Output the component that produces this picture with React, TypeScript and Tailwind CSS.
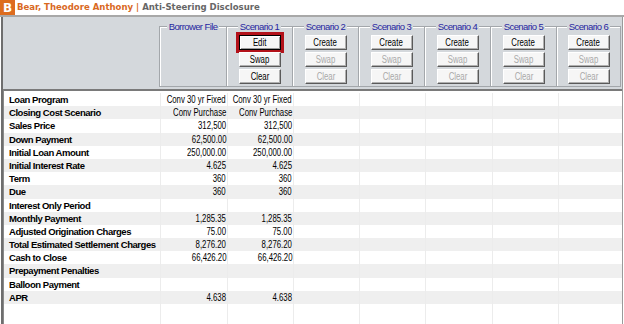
import React from "react";

const rows: [string, string, string][] = [
  ["Loan Program", "Conv 30 yr Fixed", "Conv 30 yr Fixed"],
  ["Closing Cost Scenario", "Conv Purchase", "Conv Purchase"],
  ["Sales Price", "312,500", "312,500"],
  ["Down Payment", "62,500.00", "62,500.00"],
  ["Initial Loan Amount", "250,000.00", "250,000.00"],
  ["Initial Interest Rate", "4.625", "4.625"],
  ["Term", "360", "360"],
  ["Due", "360", "360"],
  ["Interest Only Period", "", ""],
  ["Monthly Payment", "1,285.35", "1,285.35"],
  ["Adjusted Origination Charges", "75.00", "75.00"],
  ["Total Estimated Settlement Charges", "8,276.20", "8,276.20"],
  ["Cash to Close", "66,426.20", "66,426.20"],
  ["Prepayment Penalties", "", ""],
  ["Balloon Payment", "", ""],
  ["APR", "4.638", "4.638"],
];

const colW = ["w-[67px]", "w-[66px]", "w-[66px]", "w-[66px]", "w-[67px]", "w-[66px]", "w-[64px]"];

const body = { fontFamily: '"Liberation Sans", Arial, sans-serif' };

function Btn({ label, disabled, focus }: { label: string; disabled?: boolean; focus?: boolean }) {
  return (
    <div
      className={
        "w-[42px] h-[15px] flex items-center justify-center bg-[#f6f6f6] " +
        (focus
          ? "border border-black ring-[3px] ring-[#b3121a] shadow-[inset_1px_1px_0_#fff,inset_-1px_-1px_0_#9a9a9a]"
          : "border border-t-white border-l-white border-b-[#5a5a5a] border-r-[#5a5a5a] shadow-[inset_-1px_-1px_0_#b0b0b0]") +
        (disabled ? " text-[#a9a9a9]" : " text-black")
      }
    >
      <span className="inline-block text-[10px] leading-none scale-x-[0.78] origin-center whitespace-nowrap">{label}</span>
    </div>
  );
}

function Group({ title, children, w, last }: { title: string; children?: React.ReactNode; w: string; last?: boolean }) {
  return (
    <div
      className={
        "relative h-[61px] border-t border-b border-l border-[#a3a7ab] shadow-[inset_1px_1px_0_#fff] " +
        w +
        (last ? " border-r" : "")
      }
    >
      <div className="absolute left-0 right-0 -top-[6px] flex justify-center">
        <span className="bg-[#d4d8dc] px-[2px] text-[9.5px] leading-[11px] tracking-[-0.6px] text-[#2626a0]">{title}</span>
      </div>
      <div className="flex flex-col items-center gap-[2px] pt-[8px]">{children}</div>
    </div>
  );
}

export default function App() {
  return (
    <div className="w-[624px] h-[324px] bg-white overflow-hidden flex flex-col" style={body}>
      {/* header */}
      <div className="h-[17px] flex items-start border-b-2 border-[#a8a8a8] bg-white">
        <div
          className="w-[15px] h-[15px] bg-[#dd6c1e] flex items-center justify-center text-white font-bold text-[12px] leading-none"
          style={{ fontFamily: '"DejaVu Sans", sans-serif' }}
        >
          B
        </div>
        <div
          className="ml-[2px] h-[15px] flex items-center text-[9.5px] font-bold whitespace-pre"
          style={{ fontFamily: '"DejaVu Sans Condensed", "DejaVu Sans", sans-serif' }}
        >
          <span className="text-[#d9691f]">Bear, Theodore Anthony | </span>
          <span className="text-[#666]">Anti-Steering Disclosure</span>
        </div>
      </div>

      {/* body */}
      <div className="flex-1 ml-[1px] mr-[1px] border-l-2 border-[#6e6e6e] border-r border-r-[#9a9a9a] flex flex-col min-h-0">
        {/* panel */}
        <div className="h-[80px] bg-[#d4d8dc] pl-[156px] pt-[9px] flex">
          <Group title="Borrower File" w="w-[67px]" />
          <Group title="Scenario 1" w="w-[66px]">
            <Btn label="Edit" focus />
            <Btn label="Swap" />
            <Btn label="Clear" />
          </Group>
          {[2, 3, 4, 5, 6].map((n) => (
            <Group key={n} title={`Scenario ${n}`} w={n === 6 ? "w-[65px]" : "w-[66px]"} last={n === 6}>
              <Btn label="Create" />
              <Btn label="Swap" disabled />
              <Btn label="Clear" disabled />
            </Group>
          ))}
        </div>

        {/* table */}
        <div className="flex-1 border-t-2 border-[#7a7a7a] border-l border-l-[#8a8a8a] pt-[2.5px] bg-white">
          {rows.map((r, i) => (
            <div key={i} className={"flex h-[13.2px] " + (i % 2 === 1 ? "bg-[#efefef]" : "bg-white")}>
              <div className="w-[156px] pl-[5px] font-bold text-[9.5px] leading-[13.2px] tracking-[-0.45px] text-black whitespace-nowrap">
                {r[0]}
              </div>
              {colW.map((w, j) => (
                <div
                  key={j}
                  className={w + " border-l border-[#ececec] pr-[1px] flex justify-end text-[10px] leading-[13.2px] text-black whitespace-nowrap"}
                >
                  {j < 2 && r[j + 1] ? (
                    <span className="inline-block scale-x-[0.78] origin-right">{r[j + 1]}</span>
                  ) : null}
                </div>
              ))}
            </div>
          ))}
          <div className="flex h-[20px] bg-white">
            <div className="w-[156px]" />
            {colW.map((w, j) => (
              <div key={j} className={w + " border-l border-[#ececec]"} />
            ))}
          </div>
        </div>
      </div>
    </div>
  );
}
